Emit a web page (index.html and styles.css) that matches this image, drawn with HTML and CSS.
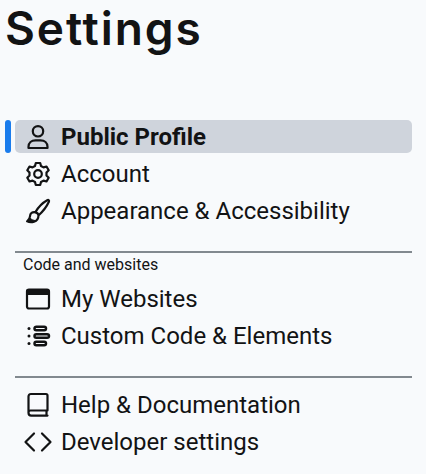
FILE: index.html
```html
<!DOCTYPE html>
<html lang="en">
<head>
<meta charset="utf-8">
<title>Settings</title>
<link rel="stylesheet" href="styles.css">
</head>
<body>
<h1 class="title"><span class="title-text">Settings</span></h1>
<nav class="nav">
  <a class="item active"><svg class="icon" viewBox="0 0 26 26"><circle cx="13" cy="7.3" r="5.2"/><path d="M3.500 24v-1.200c0-4 3-6.500 7-6.500h5c4 0 7 2.500 7 6.500V24z"/></svg><span class="text">Public Profile</span></a>
  <a class="item"><svg class="icon" viewBox="0 0 26 26"><circle cx="13" cy="13" r="3.800"/><path d="M10.800 2h4.400l.8 3 2.500 1.400 3-.9 2.200 3.800-2.200 2.300v2.800l2.200 2.300-2.200 3.800-3-.9-2.500 1.400-.8 3h-4.400l-.8-3-2.500-1.400-3 .9-2.200-3.800 2.200-2.300v-2.800L2.300 9.300l2.200-3.800 3 .9L10 5z"/></svg><span class="text">Account</span></a>
  <a class="item"><svg class="icon" viewBox="0 0 26 26"><path d="M10.300 14.300C13 9.500 18 4.500 22.200 2.200c1.300-.7 2.300.3 1.700 1.600C21.600 8.700 17.500 14 13.500 17.300M10.300 14.300c2 .3 3 1.300 3.200 3M10.300 14.300c-3-.5-5.200 1-5.300 4-.1 2-.9 3.500-2.800 5 3 1.600 11.300 1.700 11.300-6"/><path class="solid" d="M2 23.300c2-.8 3-1.700 3.500-3 1 1.500 3 2.100 5.500 2.300-2 2-6 2.200-9 .7z"/></svg><span class="text">Appearance &amp; Accessibility</span></a>
  <hr class="rule">
  <div class="label">Code and websites</div>
  <a class="item"><svg class="icon" viewBox="0 0 26 26"><rect x="2" y="3.500" width="22" height="19" rx="2"/><path class="solid" d="M2 4h22v4.500H2z"/></svg><span class="text">My Websites</span></a>
  <a class="item"><svg class="icon" viewBox="0 0 26 26"><g class="heavy"><rect x="9.500" y="3.700" width="11.500" height="3.600" rx="1.800"/><rect x="9.500" y="11.200" width="14.500" height="3.600" rx="1.800"/><rect x="9.500" y="18.700" width="11.500" height="3.600" rx="1.800"/></g><circle class="dot" cx="4" cy="5.500" r="1.500"/><circle class="dot" cx="4" cy="13" r="1.500"/><circle class="dot" cx="4" cy="20.500" r="1.500"/></svg><span class="text">Custom Code &amp; Elements</span></a>
  <hr class="rule">
  <a class="item after-rule"><svg class="icon" viewBox="0 0 26 26"><path d="M22.500 18.500h-17c-1.300 0-2 .9-2 2.300M22.500 18.500V3.500c0-.9-.5-1.500-1.500-1.500H6C4.300 2 3.500 3 3.500 4.500v16.300c0 1.800 1 2.800 2.700 2.800h16.300M21.500 18.500v5"/></svg><span class="text">Help &amp; Documentation</span></a>
  <a class="item"><svg class="icon" viewBox="0 0 26 26"><path d="M9 4.500L.5 13 9 21.500M17 4.500l8.500 8.500-8.500 8.500"/></svg><span class="text">Developer settings</span></a>
</nav>
</body>
</html>
```
FILE: styles.css
```css
* { box-sizing: border-box; }
body {
  margin: 0;
  height: 474px;
  overflow: hidden;
  background: #f8fafc;
  color: #121314;
  font-family: Roboto, "Liberation Sans", sans-serif;
}
.title {
  margin: 0;
  height: 120px;
  padding-left: 5px;
  font: 600 46px/56px Inter, sans-serif;
  letter-spacing: 1.9px;
}
.title-text { display: inline-block; }
.nav {
  display: flex;
  flex-direction: column;
  width: 397px;
  margin-left: 15px;
}
.item {
  position: relative;
  display: flex;
  align-items: center;
  gap: 10px;
  height: 33px;
  margin-bottom: 4px;
  padding-left: 10px;
  border-radius: 5px;
  font-size: 24px;
  line-height: 31px;
  white-space: nowrap;
}
.text { padding-top: 2px; }
.active { background: #cfd4dc; font-weight: 700; }
.active::before {
  content: "";
  position: absolute;
  left: -10px;
  top: 0;
  width: 6px;
  height: 33px;
  border-radius: 3px;
  background: #1a7cec;
}
.icon {
  flex: none;
  width: 26px;
  height: 26px;
  overflow: visible;
  fill: none;
  stroke: #121314;
  stroke-width: 2.2;
  stroke-linejoin: round;
  stroke-linecap: round;
}
.icon .solid { fill: #121314; stroke-width: 1; }
.icon .heavy { stroke-width: 2.5; }
.icon .dot { fill: #121314; stroke: none; }
.rule {
  width: 100%;
  height: 2px;
  margin: 20px 0 0;
  border: 0;
  background: #82898f;
}
.label {
  height: 29px;
  padding-left: 8px;
  font-size: 16px;
  line-height: 23px;
}
.after-rule { margin-top: 10px; }
```
